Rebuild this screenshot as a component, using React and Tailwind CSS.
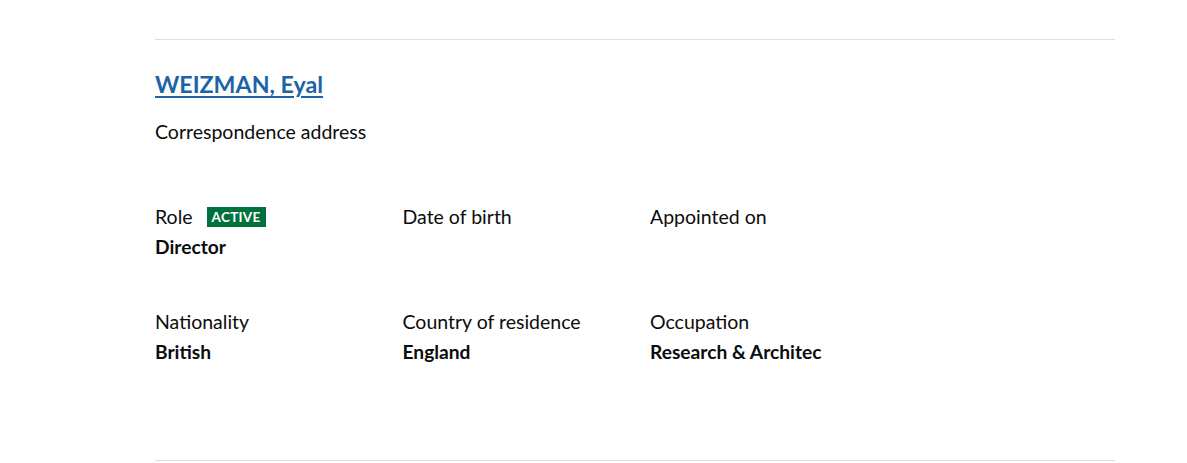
import React from "react";

function Field({ label, value, badge }) {
  return (
    <div className="px-[15px]">
      <div className="flex items-center h-[30px] text-[19.5px] leading-[30px]">
        <span>{label}</span>
        {badge && (
          <span className="ml-[14px] bg-[#00703c] text-white text-[13.5px] font-bold leading-[20px] px-[5px] tracking-[0.3px]">
            {badge}
          </span>
        )}
      </div>
      <div className="h-[30px] text-[19.2px] leading-[30px] font-bold">{value}</div>
    </div>
  );
}

export default function App() {
  return (
    <div
      className="bg-white text-[#0b0c0c] w-[1187px] h-[463px] overflow-hidden"
      style={{ fontFamily: "Lato, 'Open Sans', sans-serif" }}
    >
      <div className="ml-[140px] w-[990px] pt-[39px]">
        <div className="mx-[15px] border-t border-[#dedede]" />
        <div className="px-[15px] pt-[29px]">
          <a
            href="#"
            className="text-[23.2px] leading-[30px] font-bold text-[#1d64a6] underline underline-offset-[3px] decoration-[2px]"
          >
            WEIZMAN, Eyal
          </a>
          <p className="mt-[18px] text-[19.5px] leading-[30px]">Correspondence address</p>
        </div>
        <div className="grid grid-cols-[247.5px_247.5px_247.5px] mt-[55px]">
          <Field label="Role" value="Director" badge="ACTIVE" />
          <Field label="Date of birth" value="" />
          <Field label="Appointed on" value="" />
        </div>
        <div className="grid grid-cols-[247.5px_247.5px_247.5px] mt-[45px]">
          <Field label="Nationality" value="British" />
          <Field label="Country of residence" value="England" />
          <Field label="Occupation" value="Research & Architec" />
        </div>
        <div className="mx-[15px] mt-[93px] border-t border-[#dedede]" />
      </div>
    </div>
  );
}
